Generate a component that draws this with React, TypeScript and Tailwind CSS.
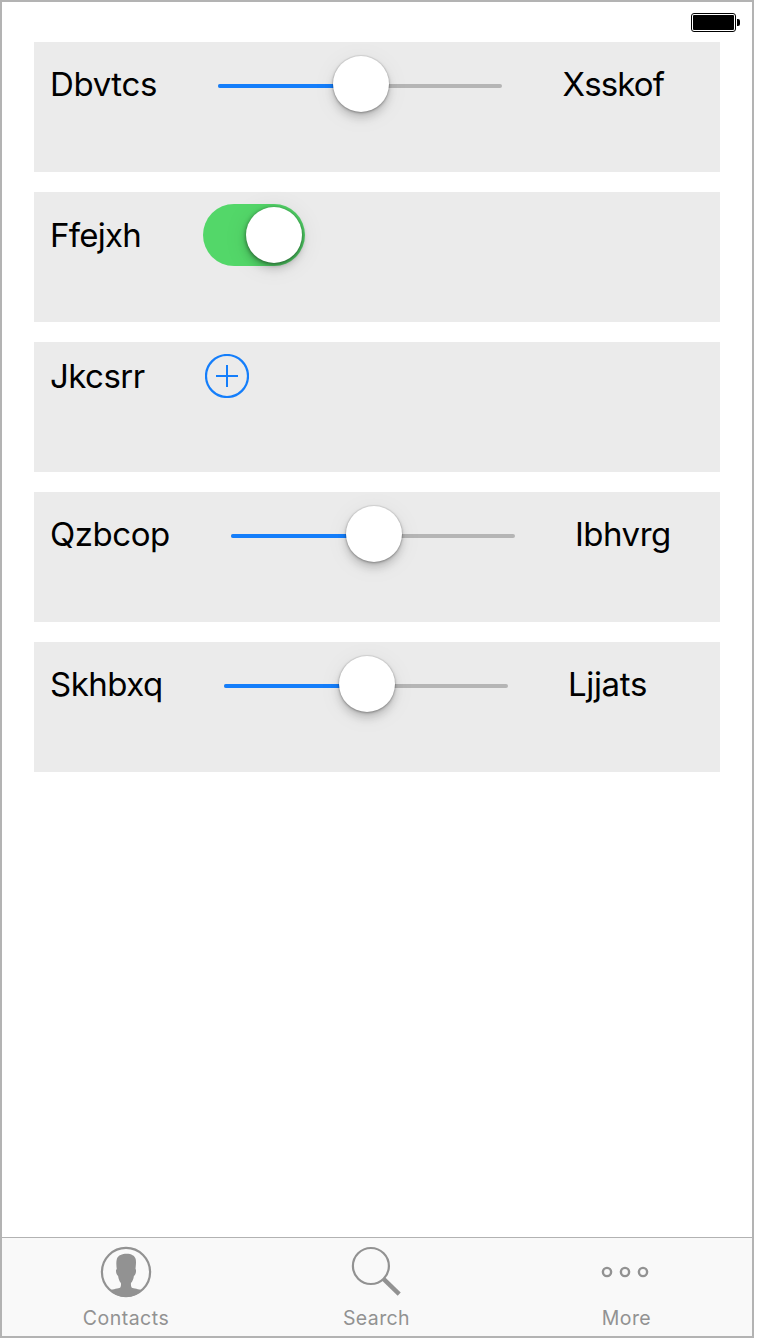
import type { ReactNode } from "react";

function Card({ children }: { children: ReactNode }) {
  return <section className="flex h-[130px] w-[686px] items-start bg-[#ebebeb] pl-4">{children}</section>;
}

function Label({ text, className }: { text: string; className: string }) {
  return (
    <span className={`h-10 shrink-0 whitespace-nowrap text-[33px] leading-10 text-black ${className}`}>{text}</span>
  );
}

function Slider() {
  return (
    <div className="relative mt-[42px] flex h-1 w-[284px] shrink-0 overflow-visible rounded-full bg-[#b5b5b5]">
      <div className="h-1 w-[142px] rounded-l-full bg-[#147efb]" />
      <div className="absolute -top-[28px] left-[115px] size-14 rounded-full bg-white shadow-[0_0_0_1px_rgba(0,0,0,0.05),0_1px_3px_rgba(0,0,0,0.3),0_6px_9px_rgba(0,0,0,0.17),0_4px_26px_rgba(0,0,0,0.06)]" />
    </div>
  );
}

function Toggle() {
  return (
    <div className="mt-3 flex h-[62px] w-[102px] shrink-0 items-center justify-end rounded-full bg-[#53d769] pr-[3px]">
      <div className="size-14 rounded-full bg-white shadow-[0_1px_4px_rgba(0,0,0,0.5),0_6px_9px_rgba(0,0,0,0.16),0_3px_26px_rgba(0,0,0,0.09)]" />
    </div>
  );
}

function Tab({ label, className, labelClass, children }: { label: string; className: string; labelClass: string; children: ReactNode }) {
  return (
    <div className={`flex flex-col items-center pt-2 ${className}`}>
      <svg width="52" height="52" viewBox="0 0 52 52" fill="none" stroke="#929292">
        {children}
      </svg>
      <span className={`mt-2 whitespace-nowrap text-[19.5px] leading-6 text-[#929292] ${labelClass}`}>{label}</span>
    </div>
  );
}

export default function App() {
  return (
    <div className="h-[1340px] w-[760px] bg-white font-['Inter',sans-serif]">
      <div className="flex h-[1338px] w-[754px] flex-col border-2 border-[#b3b3b3] bg-white">
        <header className="flex h-10 shrink-0 items-start justify-end pt-[11px] pr-3">
          <svg width="49" height="19" viewBox="0 0 49 19">
            <rect x="0.5" y="0.5" width="44" height="18" rx="2.5" fill="none" stroke="black" />
            <rect x="2" y="2" width="41" height="15" rx="1" fill="black" />
            <path d="M46 6h1a2 2 0 0 1 2 2v3a2 2 0 0 1-2 2h-1z" fill="black" />
          </svg>
        </header>
        <main className="flex flex-1 flex-col gap-5 pl-8">
          <Card>
            <Label text="Dbvtcs" className="mt-[22px] w-[168px] tracking-[-0.35px]" />
            <Slider />
            <Label text="Xsskof" className="mt-[22px] ml-[60.5px] tracking-[-0.85px]" />
          </Card>
          <Card>
            <Label text="Ffejxh" className="mt-[23px] w-[153px] tracking-[-0.75px]" />
            <Toggle />
          </Card>
          <Card>
            <Label text="Jkcsrr" className="mt-[14px] w-[155px] tracking-[-0.55px]" />
            <svg className="mt-3 shrink-0" width="44" height="44" viewBox="0 0 44 44" fill="none" stroke="#147efb" strokeWidth="2">
              <circle cx="22" cy="22" r="21" strokeWidth="2.2" />
              <path d="M11 22h22M22 11v22" />
            </svg>
          </Card>
          <Card>
            <Label text="Qzbcop" className="mt-[22px] w-[181px] tracking-[-0.45px]" />
            <Slider />
            <Label text="Ibhvrg" className="mt-[22px] ml-[60px] tracking-[-0.5px]" />
          </Card>
          <Card>
            <Label text="Skhbxq" className="mt-[22px] w-[174px] tracking-[-0.5px]" />
            <Slider />
            <Label text="Ljjats" className="mt-[22px] ml-[60px] tracking-[-0.35px]" />
          </Card>
        </main>
        <nav className="flex h-[99px] w-full shrink-0 border-t border-[#b2b2b2] bg-[#f9f9f9]">
          <Tab label="Contacts" className="w-[248px]" labelClass="tracking-[0.5px]">
            <circle cx="26" cy="26" r="24.1" strokeWidth="2.2" />
            <path
              d="M10 44.3C13 43 18.5 42.7 20.3 41.5c.8-1.4.8-3 .6-4.6-1.5-1.5-2.3-4-2.8-7-1.5-1-2.3-3.6-2.1-6.1l.8-.5c-.5-4-.8-7.5.1-10.6 1.3-3.5 5.4-4.9 9.6-4.9 5 0 8.1 2 9.1 5 .8 2.5.2 7-.1 10.2l.5.7c.3 2.6-.7 5.3-2.1 6.2-.4 3-1.4 5.5-2.9 7-.2 1.6-.1 3.3.6 4.6 2 1.2 7.4 1.5 10.4 2.8C38 48.5 32.5 51 26 51s-12-2.5-16-6.7Z"
              fill="#929292"
              stroke="none"
            />
          </Tab>
          <Tab label="Search" className="w-[252px]" labelClass="pl-px tracking-[0.4px]">
            <circle cx="20.9" cy="20" r="18" strokeWidth="2.2" />
            <path d="m33.2 32.6 16 15.6" strokeWidth="4.4" />
          </Tab>
          <Tab label="More" className="w-[248px]" labelClass="pl-px tracking-[0.4px]">
            <circle cx="7" cy="26" r="4.1" strokeWidth="2.4" />
            <circle cx="25" cy="26" r="4.1" strokeWidth="2.4" />
            <circle cx="43" cy="26" r="4.1" strokeWidth="2.4" />
          </Tab>
        </nav>
      </div>
    </div>
  );
}
